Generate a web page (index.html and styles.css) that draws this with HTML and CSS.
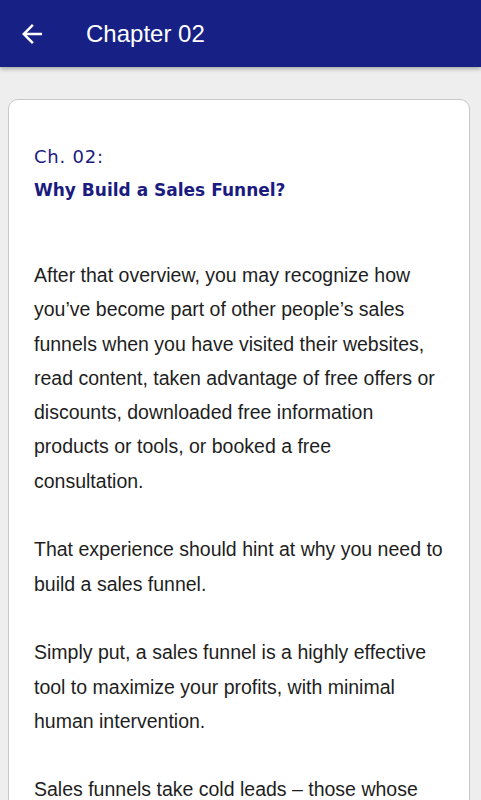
FILE: index.html
```html
<!DOCTYPE html>
<html>
<head>
<meta charset="utf-8">
<link rel="stylesheet" href="styles.css">
</head>
<body>
<header class="appbar">
  <svg class="back" viewBox="0 0 24 24" width="30" height="30"><path d="M20 11H7.83l5.59-5.59L12 4l-8 8 8 8 1.41-1.41L7.83 13H20v-2z" fill="#fff"/></svg>
  <h1 class="title">Chapter 02</h1>
</header>
<main class="card">
  <div class="heading">
    <div class="ch">Ch. 02:</div>
    <div class="sub">Why Build a Sales Funnel?</div>
  </div>
  <p>After that overview, you may recognize how you’ve become part of other people’s sales funnels when you have visited their websites, read content, taken advantage of free offers or discounts, downloaded free information products or tools, or booked a free consultation.</p>
  <p>That experience should hint at why you need to build a sales funnel.</p>
  <p>Simply put, a sales funnel is a highly effective tool to maximize your profits, with minimal human intervention.</p>
  <p>Sales funnels take cold leads – those whose interest in your business is minimal – and turn them into paying customers.</p>
</main>
</body>
</html>
```
FILE: styles.css
```css
html, body { margin: 0; padding: 0; }
body {
  background: #eeeeee;
  font-family: "Liberation Sans", Arial, sans-serif;
  height: 800px;
  overflow: hidden;
}
.appbar {
  height: 67px;
  background: #172084;
  display: flex;
  align-items: center;
  box-shadow: 0 2px 4px rgba(0,0,0,0.3);
  position: relative;
  z-index: 1;
}
.back { margin-left: 17px; flex: none; }
.title {
  margin: 0 0 0 39px;
  color: #fff;
  font-weight: normal;
  font-size: 24px;
}
.card {
  margin: 32px 11px 0 8px;
  background: #fff;
  border: 1px solid #c8c8c8;
  border-radius: 10px;
  padding: 40px 24px 0 25px;
  min-height: 800px;
}
.heading {
  font-family: "DejaVu Sans", sans-serif;
  color: #1b1b80;
  font-size: 17px;
  line-height: 33.5px;
  margin-bottom: 51px;
}
.ch { font-size: 18px; letter-spacing: 0.8px; }
.sub { font-weight: bold; }
.card p {
  margin: 0 0 34.3px 0;
  font-size: 19.5px;
  line-height: 34.3px;
  color: #1e1e1e;
}
```
